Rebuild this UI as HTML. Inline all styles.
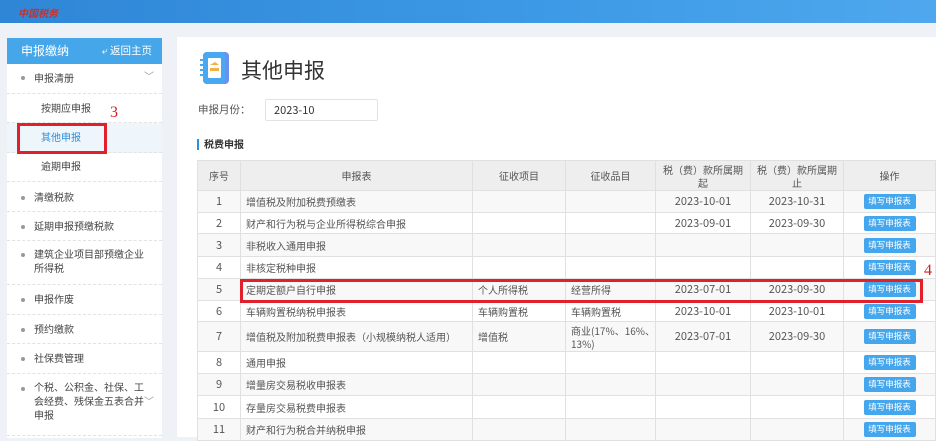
<!DOCTYPE html>
<html><head><meta charset="utf-8"><style>
*{margin:0;padding:0;box-sizing:border-box}
body{width:936px;height:436px;overflow:hidden;background:#eef1f5;font-family:"Liberation Sans","Noto Sans CJK SC",sans-serif;font-size:10px;color:#555;position:relative}
.cj{font-family:"Noto Sans CJK SC","Liberation Sans",sans-serif}
.top{position:absolute;left:0;top:0;width:936px;height:23px;background:linear-gradient(90deg,#2f86d6,#3d9ae6 60%,#4fa8ee)}
.logo{position:absolute;left:18px;top:5px;color:#c8302a;font-size:10px;font-style:italic;font-weight:bold}
.side{position:absolute;left:7px;top:38px;width:155px;height:400px;background:#fff}
.sh{height:26px;background:#46a6ea;color:#fff;font-size:12px;line-height:26px;padding-left:14px;position:relative;font-family:"Noto Sans CJK SC",sans-serif}
.sh span{position:absolute;right:10px;top:0;font-size:10.5px}
.it{position:absolute;left:7px;width:155px;border-bottom:1px dashed #e2e2e2;color:#444;font-size:10px;line-height:14px;font-family:"Noto Sans CJK SC","Liberation Sans",sans-serif}
.dot{position:absolute;left:14px;width:4px;height:4px;border-radius:2px;background:#999}
.main{position:absolute;left:177px;top:37px;width:759px;height:400px;background:#fff}
table{position:absolute;left:197px;top:160px;border-collapse:collapse;table-layout:fixed;width:738px}
td,th{border:1px solid #e0e0e0;font-weight:normal;font-size:10px;line-height:13px;color:#555;text-align:center;vertical-align:middle;padding:0;font-family:"Noto Sans CJK SC","Liberation Sans",sans-serif}
th{background:#eeeeee;height:30px;font-size:10px;padding:0 4px}
td.d{font-size:11px}
td.l{text-align:left;padding-left:5px}
tr.o td{background:#f8f8f8}
.b{display:inline-block;width:52px;height:15px;line-height:15px;background:#44a6ec;color:#fff;font-size:8.5px;border-radius:2px;vertical-align:middle}
.red{position:absolute;border:3px solid #e0202a}
.num{position:absolute;color:#d42020;font-family:"Liberation Serif",serif;font-size:16px}
</style></head><body>
<div class="top"><div class="logo">中国税务</div></div>
<div class="side">
<div class="sh">申报缴纳<span>&#10550; 返回主页</span></div>
</div>
<div class="it" style="top:64px;height:30px"><div class="dot" style="top:12px"></div><span style="position:absolute;left:27px;top:7px">申报清册</span><span style="position:absolute;left:137px;top:5px;color:#999">﹀</span></div>
<div class="it" style="top:94px;height:29px"><span style="position:absolute;left:34px;top:7px">按期应申报</span></div>
<div class="it" style="top:123px;height:30px;background:#eef5fb"><span style="position:absolute;left:34px;top:7px;color:#2a90d8">其他申报</span></div>
<div class="it" style="top:153px;height:29px"><span style="position:absolute;left:34px;top:6px">逾期申报</span></div>
<div class="it" style="top:182px;height:30px"><div class="dot" style="top:14px"></div><span style="position:absolute;left:27px;top:8px">清缴税款</span></div>
<div class="it" style="top:212px;height:29px"><div class="dot" style="top:13px"></div><span style="position:absolute;left:27px;top:7px">延期申报预缴税款</span></div>
<div class="it" style="top:241px;height:44px"><div class="dot" style="top:12px"></div><span style="position:absolute;left:27px;top:6px;width:112px">建筑企业项目部预缴企业所得税</span></div>
<div class="it" style="top:285px;height:30px"><div class="dot" style="top:13px"></div><span style="position:absolute;left:27px;top:7px">申报作废</span></div>
<div class="it" style="top:315px;height:29px"><div class="dot" style="top:13px"></div><span style="position:absolute;left:27px;top:7px">预约缴款</span></div>
<div class="it" style="top:344px;height:30px"><div class="dot" style="top:13px"></div><span style="position:absolute;left:27px;top:7px">社保费管理</span></div>
<div class="it" style="top:374px;height:62px"><div class="dot" style="top:13px"></div><span style="position:absolute;left:27px;top:6px;width:112px">个税、公积金、社保、工会经费、残保金五表合并申报</span><span style="position:absolute;left:137px;top:20px;color:#999">﹀</span></div>
<div class="main"></div>
<svg style="position:absolute;left:199px;top:51px" width="32" height="34" viewBox="0 0 32 34"><rect x="4" y="1" width="26" height="32" rx="4" fill="#6c8ff0"/><rect x="4" y="1" width="22" height="32" rx="4" fill="#48a8f2"/><rect x="9" y="7" width="13" height="20" rx="1" fill="#fff"/><path d="M11 14 L16 11 L20 14 Z" fill="#f3b04a"/><rect x="11" y="17" width="9" height="3" fill="#f3b04a"/><g fill="#48a8f2"><rect x="1" y="8" width="5" height="2"/><rect x="1" y="13" width="5" height="2"/><rect x="1" y="18" width="5" height="2"/><rect x="1" y="23" width="5" height="2"/></g></svg>
<div class="cj" style="position:absolute;left:241px;top:55px;font-size:21px;line-height:30px;color:#333">其他申报</div>
<div class="cj" style="position:absolute;left:198px;top:102px;font-size:10.5px;line-height:16px;color:#555">申报月份：</div>
<div class="cj" style="position:absolute;left:265px;top:99px;width:113px;height:22px;border:1px solid #e2e2e2;border-radius:2px;font-size:11px;line-height:20px;padding-left:8px;color:#333">2023-10</div>
<div style="position:absolute;left:197px;top:139px;width:2px;height:11px;background:#2a90d8"></div>
<div class="cj" style="position:absolute;left:204px;top:136px;font-size:10px;line-height:16px;color:#333;font-weight:bold">税费申报</div>
<table>
<colgroup><col style="width:43px"><col style="width:232px"><col style="width:93px"><col style="width:90px"><col style="width:95px"><col style="width:93px"><col style="width:92px"></colgroup>
<tr><th>序号</th><th>申报表</th><th>征收项目</th><th>征收品目</th><th>税（费）款所属期起</th><th>税（费）款所属期止</th><th>操作</th></tr>
<tr class="o" style="height:22px"><td class="d">1</td><td class="l">增值税及附加税费预缴表</td><td></td><td></td><td class="d">2023-10-01</td><td class="d">2023-10-31</td><td><span class="b">填写申报表</span></td></tr>
<tr style="height:21px"><td class="d">2</td><td class="l">财产和行为税与企业所得税综合申报</td><td></td><td></td><td class="d">2023-09-01</td><td class="d">2023-09-30</td><td><span class="b">填写申报表</span></td></tr>
<tr class="o" style="height:23px"><td class="d">3</td><td class="l">非税收入通用申报</td><td></td><td></td><td></td><td></td><td><span class="b">填写申报表</span></td></tr>
<tr style="height:22px"><td class="d">4</td><td class="l">非核定税种申报</td><td></td><td></td><td></td><td></td><td><span class="b">填写申报表</span></td></tr>
<tr class="o" style="height:22px"><td class="d">5</td><td class="l">定期定额户自行申报</td><td class="l">个人所得税</td><td class="l">经营所得</td><td class="d">2023-07-01</td><td class="d">2023-09-30</td><td><span class="b">填写申报表</span></td></tr>
<tr style="height:21px"><td class="d">6</td><td class="l">车辆购置税纳税申报表</td><td class="l">车辆购置税</td><td class="l">车辆购置税</td><td class="d">2023-10-01</td><td class="d">2023-10-01</td><td><span class="b">填写申报表</span></td></tr>
<tr class="o" style="height:30px"><td class="d">7</td><td class="l">增值税及附加税费申报表（小规模纳税人适用）</td><td class="l">增值税</td><td class="l">商业(17%、16%、13%)</td><td class="d">2023-07-01</td><td class="d">2023-09-30</td><td><span class="b">填写申报表</span></td></tr>
<tr style="height:22px"><td class="d">8</td><td class="l">通用申报</td><td></td><td></td><td></td><td></td><td><span class="b">填写申报表</span></td></tr>
<tr class="o" style="height:22px"><td class="d">9</td><td class="l">增量房交易税收申报表</td><td></td><td></td><td></td><td></td><td><span class="b">填写申报表</span></td></tr>
<tr style="height:23px"><td class="d">10</td><td class="l">存量房交易税费申报表</td><td></td><td></td><td></td><td></td><td><span class="b">填写申报表</span></td></tr>
<tr class="o" style="height:22px"><td class="d">11</td><td class="l">财产和行为税合并纳税申报</td><td></td><td></td><td></td><td></td><td><span class="b">填写申报表</span></td></tr>
</table>
<div class="red" style="left:17px;top:123px;width:90px;height:31px"></div>
<div class="num" style="left:110px;top:104px">3</div>
<div class="red" style="left:240px;top:279px;width:683px;height:24px"></div>
<div class="num" style="left:924px;top:262px">4</div>
</body></html>
